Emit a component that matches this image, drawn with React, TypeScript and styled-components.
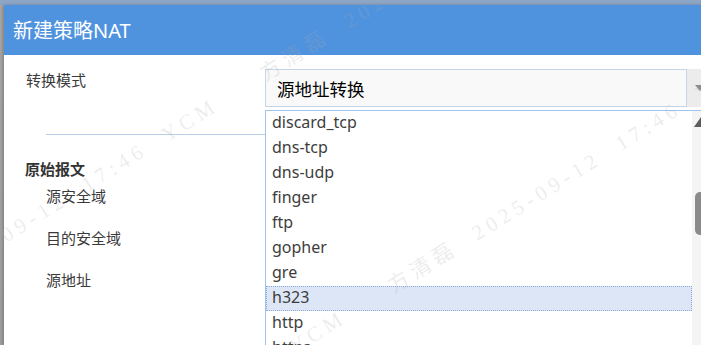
import React from "react";
import styled, { createGlobalStyle, css } from "styled-components";

const GlobalStyle = createGlobalStyle`
  html, body {
    margin: 0;
    padding: 0;
    background: #a4a4a4;
  }
  body {
    font-family: "Noto Sans", "Noto Sans CJK SC", sans-serif;
  }
`;

const Page = styled.div`
  position: relative;
  width: 701px;
  height: 345px;
  overflow: hidden;
  display: flex;
  flex-direction: column;
`;

const TopStrip = styled.div`
  height: 5px;
  flex-shrink: 0;
  background: #8ea6c6;
`;

const Stage = styled.div`
  display: flex;
  flex: 1;
`;

const Backdrop = styled.div`
  width: 4px;
  flex-shrink: 0;
  background: linear-gradient(#a6a6a6, #9e9e9e);
`;

const Dialog = styled.div`
  width: 720px;
  flex-shrink: 0;
  display: flex;
  flex-direction: column;
  background: #fff;
  box-shadow: -1px 0 3px rgba(0, 0, 0, 0.25);
`;

const Header = styled.div`
  height: 50px;
  display: flex;
  align-items: center;
  padding-left: 9px;
  background: #4f93df;
`;

const Title = styled.div`
  color: #fff;
  font-size: 20px;
  line-height: 24px;
  margin-top: 2px;
`;

const Body = styled.div`
  position: relative;
  flex: 1;
  padding-top: 14px;
  display: flex;
  flex-direction: column;
`;

const FieldRow = styled.div`
  display: grid;
  grid-template-columns: 261px 1fr;
  align-items: start;
`;

const Label = styled.div<{ $indent: number }>`
  padding-left: ${(p) => p.$indent}px;
  font-size: 15px;
  line-height: 22px;
  color: #3a3a3a;
`;

const SelectWrap = styled.div`
  display: flex;
  height: 38px;
`;

const SelectField = styled.div`
  width: 422px;
  box-sizing: border-box;
  border: 1px solid #c6d4e8;
  background: #f9f9f9;
  padding-left: 11px;
  display: flex;
  align-items: center;
  font-size: 17.5px;
  color: #000;
`;

const SelectButton = styled.div`
  width: 22px;
  display: flex;
  justify-content: center;
  align-items: center;
  background: #ececec;
  &::after {
    content: "";
    margin-left: 3px;
    border-left: 5px solid transparent;
    border-right: 5px solid transparent;
    border-top: 6px solid #8c8c8c;
  }
`;

const Divider = styled.div`
  height: 1px;
  margin: 27px 0 0 42px;
  background: #b9cde6;
`;

const Section = styled.div`
  display: flex;
  flex-direction: column;
  margin-top: 23px;
`;

const SectionTitle = styled.div`
  padding-left: 21px;
  font-size: 15px;
  font-weight: 700;
  line-height: 22px;
  color: #333;
  margin-bottom: 5px;
`;

const SubFields = styled.div`
  display: flex;
  flex-direction: column;
  gap: 20px;
`;

const Dropdown = styled.div`
  position: absolute;
  left: 261px;
  top: 55px;
  width: 444px;
  height: 300px;
  box-sizing: border-box;
  border-top: 1px solid #9fc2ee;
  border-left: 1px solid #9fc2ee;
  background: #fff;
  display: flex;
`;

const Options = styled.div`
  flex: 1;
  display: flex;
  flex-direction: column;
`;

const Option = styled.div<{ $active?: boolean }>`
  height: 25px;
  flex-shrink: 0;
  box-sizing: border-box;
  padding: 0 0 3px 5px;
  display: flex;
  align-items: center;
  font-size: 16px;
  color: #3d3d3d;
  border: 1px solid transparent;
  ${(p) =>
    p.$active &&
    css`
      background: #dce6f6;
      border: 1px dotted #8ea8d8;
    `}
`;

const Scrollbar = styled.div`
  width: 17px;
  flex-shrink: 0;
  background: #f4f4f4;
  display: flex;
  flex-direction: column;
  align-items: center;
`;

const ScrollArrow = styled.div`
  margin-top: 6px;
  border-left: 7px solid transparent;
  border-right: 7px solid transparent;
  border-bottom: 10px solid #5c5c5c;
`;

const ScrollThumb = styled.div`
  margin-top: 65px;
  width: 11px;
  height: 43px;
  border-radius: 5px;
  background: #8b8b8b;
`;

const WatermarkLayer = styled.div`
  position: absolute;
  inset: 0;
  pointer-events: none;
  overflow: hidden;
`;

const Mark = styled.span`
  position: absolute;
  white-space: nowrap;
  font-family: "Liberation Serif", "Noto Sans CJK SC", serif;
  font-size: 21px;
  line-height: 20px;
  letter-spacing: 5px;
  word-spacing: 11px;
  color: rgba(170, 170, 170, 0.22);
  transform: rotate(-32deg);
  transform-origin: 0 100%;
`;

const options = [
  "discard_tcp",
  "dns-tcp",
  "dns-udp",
  "finger",
  "ftp",
  "gopher",
  "gre",
  "h323",
  "http",
  "https",
  "icmp",
  "imap",
];

const WATERMARK = "方清磊 2025-09-12 17:46 YCM";

// diagonal lines of the tiled watermark: normal offset n, start offsets d
const ANGLE = (32 * Math.PI) / 180;
const marks: { x: number; y: number }[] = [];
[
  { n: 209, ds: [-294, 184] },
  { n: 457, ds: [-298, 180] },
].forEach(({ n, ds }) => {
  ds.forEach((d) => {
    const x = n * Math.sin(ANGLE) + d * Math.cos(ANGLE);
    const y = n * Math.cos(ANGLE) - d * Math.sin(ANGLE);
    marks.push({ x, y });
  });
});

export default function App() {
  return (
    <>
      <GlobalStyle />
      <Page>
        <TopStrip />
        <Stage>
          <Backdrop />
          <Dialog>
            <Header>
              <Title>新建策略NAT</Title>
            </Header>
            <Body>
              <FieldRow>
                <Label $indent={22}>转换模式</Label>
                <SelectWrap>
                  <SelectField>源地址转换</SelectField>
                  <SelectButton />
                </SelectWrap>
              </FieldRow>
              <Divider />
              <Section>
                <SectionTitle>原始报文</SectionTitle>
                <SubFields>
                  <Label $indent={42}>源安全域</Label>
                  <Label $indent={42}>目的安全域</Label>
                  <Label $indent={42}>源地址</Label>
                </SubFields>
              </Section>
              <Dropdown>
                <Options>
                  {options.map((o) => (
                    <Option key={o} $active={o === "h323"}>
                      {o}
                    </Option>
                  ))}
                </Options>
                <Scrollbar>
                  <ScrollArrow />
                  <ScrollThumb />
                </Scrollbar>
              </Dropdown>
            </Body>
          </Dialog>
        </Stage>
        <WatermarkLayer>
          {marks.map((m, i) => (
            <Mark key={i} style={{ left: m.x, top: m.y - 16 }}>
              {WATERMARK}
            </Mark>
          ))}
        </WatermarkLayer>
      </Page>
    </>
  );
}
